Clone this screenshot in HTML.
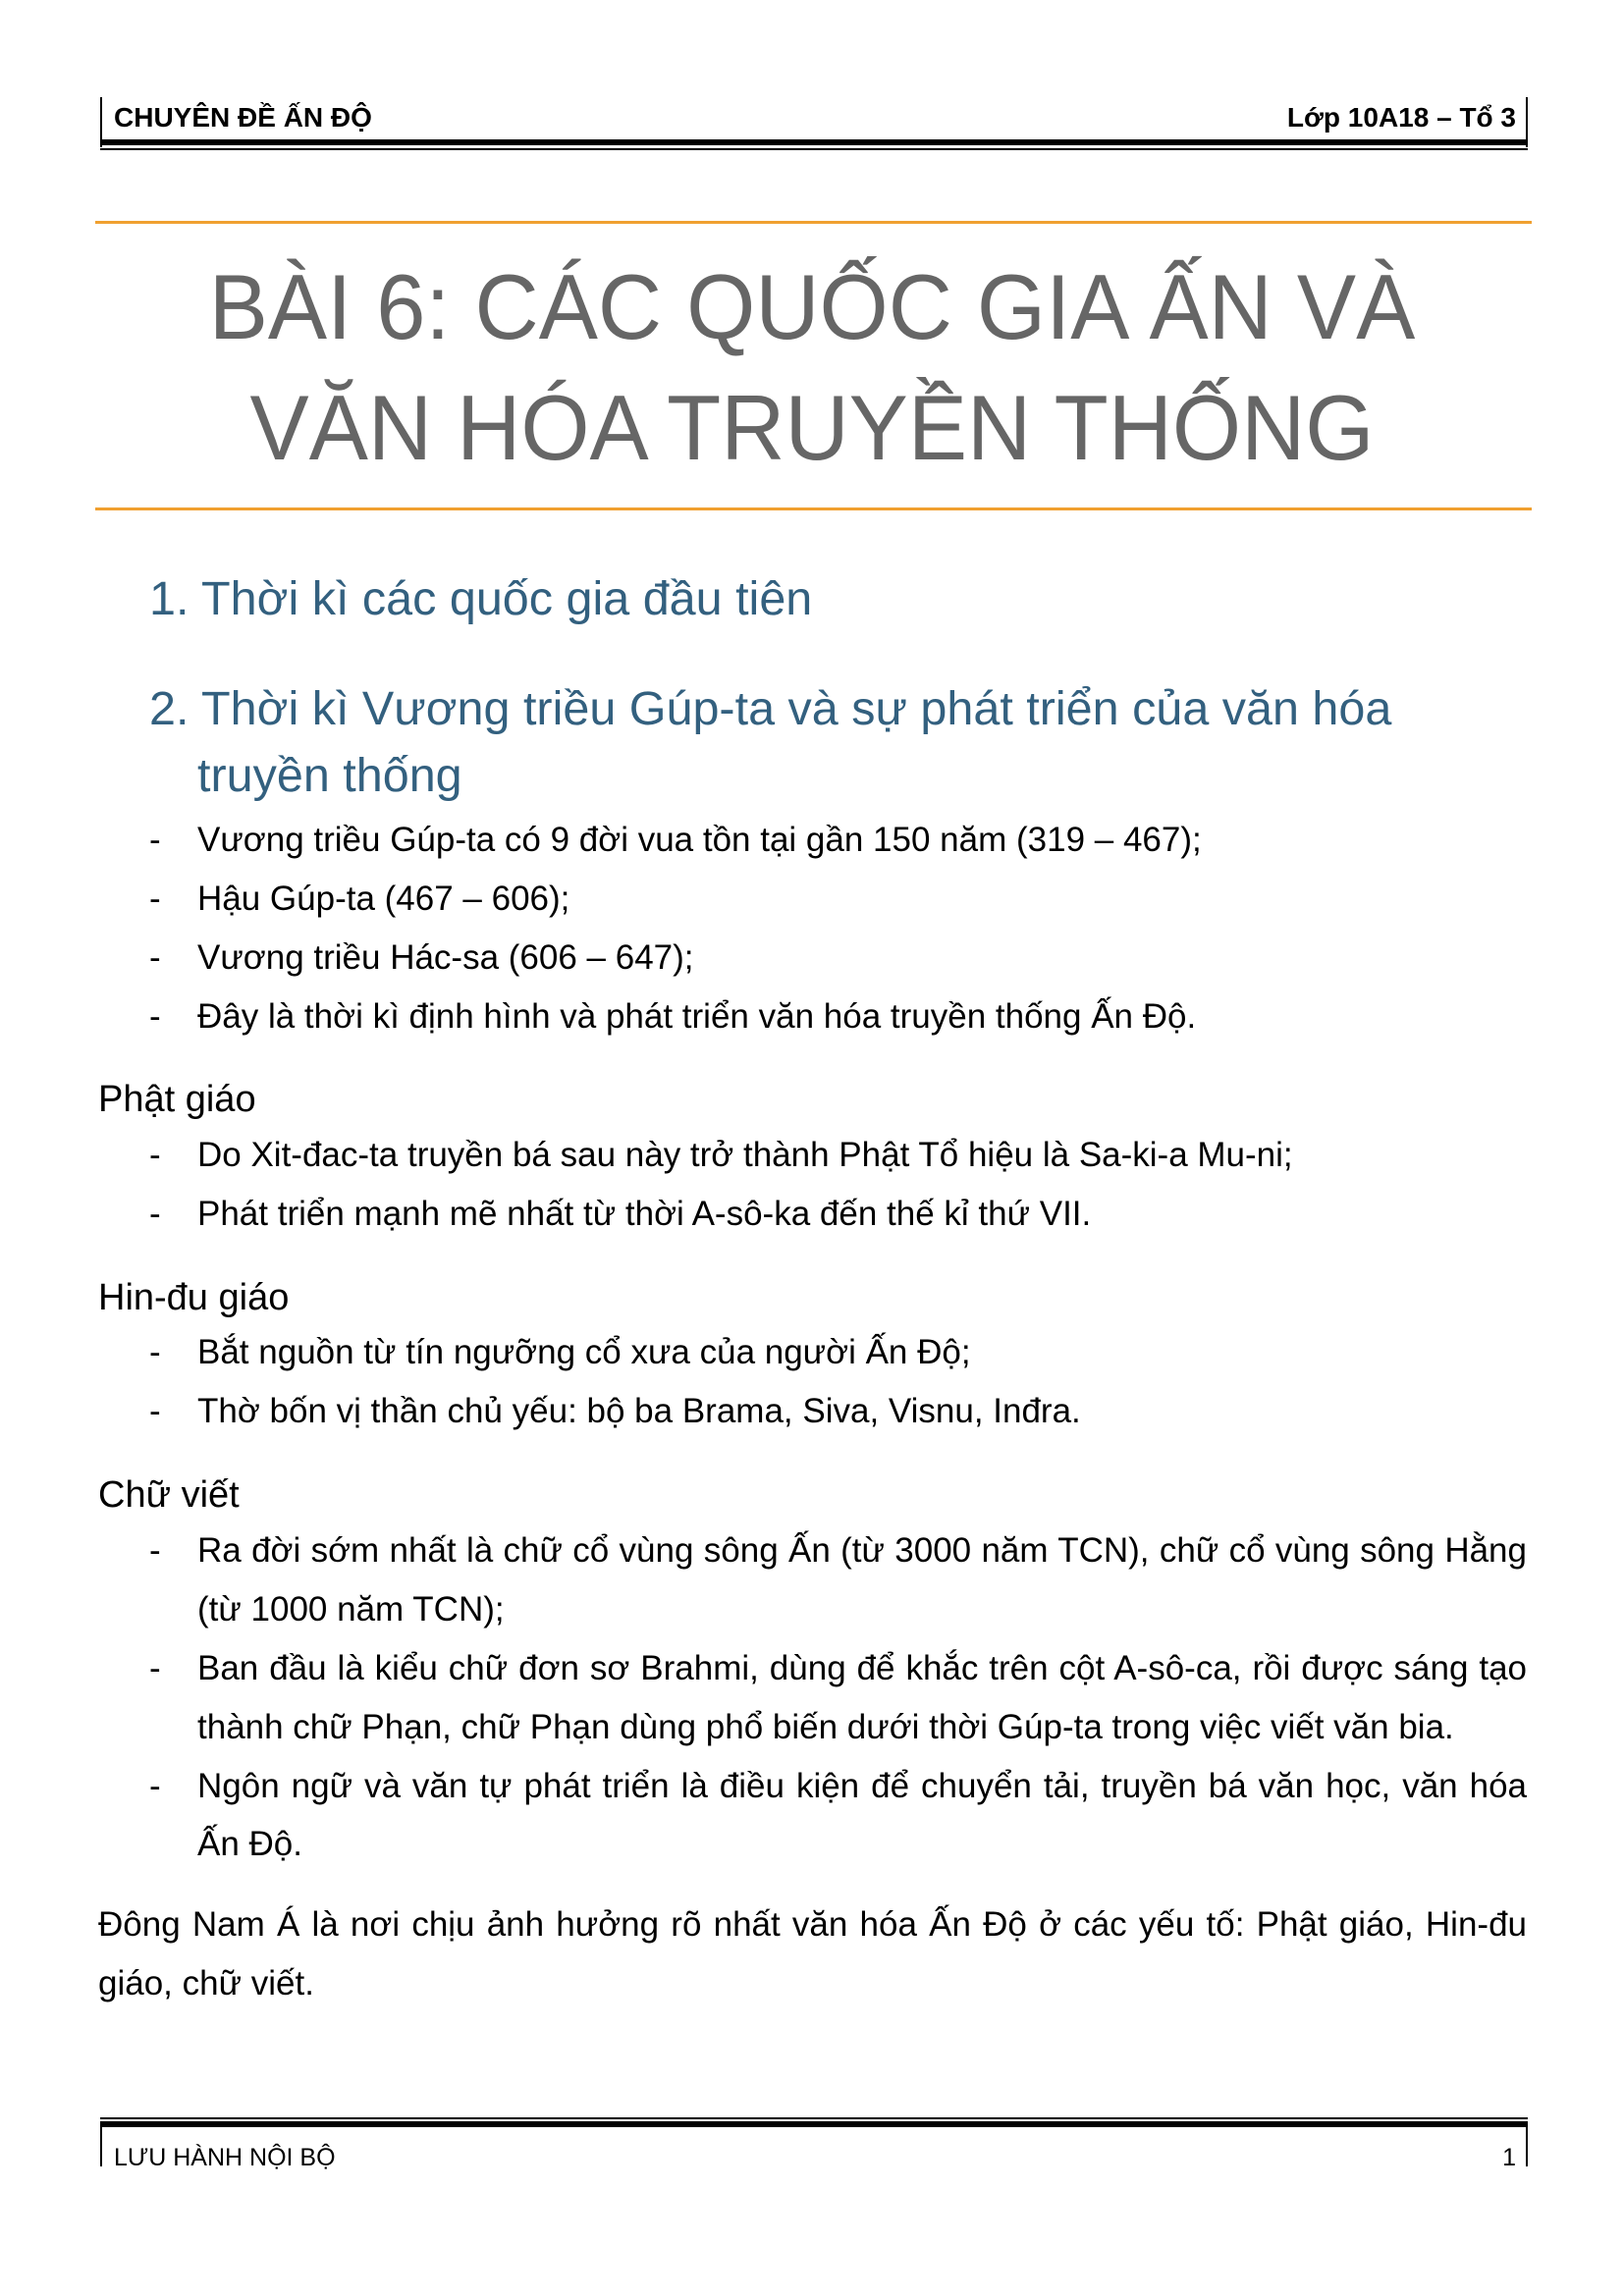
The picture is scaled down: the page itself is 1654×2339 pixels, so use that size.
<!DOCTYPE html>
<html><head><meta charset="utf-8"><style>
body{margin:0;width:1654px;height:2339px;background:#fff;position:relative;overflow:hidden;font-family:"Liberation Sans",sans-serif;color:#000}
.l{position:absolute;height:60px;line-height:60px;white-space:nowrap;font-size:35px}
.d{left:152px}
.t{left:201px}
.j{left:201px;width:1354px;text-align:justify;text-align-last:justify}
.h{color:#33607f;font-size:48.5px;left:152px}
.s{left:100px;font-size:38px}
.ti{position:absolute;left:0;width:1654px;text-align:center;font-size:94px;color:#666;height:120px;line-height:120px;transform:scaleX(0.96);transform-origin:827px 0;white-space:nowrap}
</style></head><body>
<div style="position:absolute;left:102px;top:99px;width:2px;height:51px;background:#000"></div>
<div style="position:absolute;left:1554px;top:99px;width:2px;height:51px;background:#000"></div>
<div style="position:absolute;left:102px;top:142px;width:1454px;height:6px;background:#000"></div>
<div style="position:absolute;left:102px;top:151px;width:1454px;height:2px;background:#000"></div>
<div class="l" style="left:116px;top:90px;font-weight:bold;font-size:28px">CHUYÊN ĐỀ ẤN ĐỘ</div>
<div class="l" style="right:110px;top:90px;font-weight:bold;font-size:28px">Lớp 10A18 – Tổ 3</div>
<div style="position:absolute;left:97px;top:225px;width:1463px;height:3px;background:#f0a030"></div>
<div class="ti" style="top:253px">BÀI 6: CÁC QUỐC GIA ẤN VÀ</div>
<div class="ti" style="top:376px">VĂN HÓA TRUYỀN THỐNG</div>
<div style="position:absolute;left:97px;top:517px;width:1463px;height:3px;background:#f0a030"></div>
<div class="l h" style="top:580px">1. Thời kì các quốc gia đầu tiên</div>
<div class="l h" style="top:692px">2. Thời kì Vương triều Gúp-ta và sự phát triển của văn hóa</div>
<div class="l h" style="top:760px;left:201px">truyền thống</div>
<div class="l d" style="top:826px">-</div><div class="l t" style="top:826px">Vương triều Gúp-ta có 9 đời vua tồn tại gần 150 năm (319 – 467);</div>
<div class="l d" style="top:886px">-</div><div class="l t" style="top:886px">Hậu Gúp-ta (467 – 606);</div>
<div class="l d" style="top:946px">-</div><div class="l t" style="top:946px">Vương triều Hác-sa (606 – 647);</div>
<div class="l d" style="top:1006px">-</div><div class="l t" style="top:1006px">Đây là thời kì định hình và phát triển văn hóa truyền thống Ấn Độ.</div>
<div class="l s" style="top:1090px">Phật giáo</div>
<div class="l d" style="top:1147px">-</div><div class="l t" style="top:1147px">Do Xit-đac-ta truyền bá sau này trở thành Phật Tổ hiệu là Sa-ki-a Mu-ni;</div>
<div class="l d" style="top:1207px">-</div><div class="l t" style="top:1207px">Phát triển mạnh mẽ nhất từ thời A-sô-ka đến thế kỉ thứ VII.</div>
<div class="l s" style="top:1292px">Hin-đu giáo</div>
<div class="l d" style="top:1348px">-</div><div class="l t" style="top:1348px">Bắt nguồn từ tín ngưỡng cổ xưa của người Ấn Độ;</div>
<div class="l d" style="top:1408px">-</div><div class="l t" style="top:1408px">Thờ bốn vị thần chủ yếu: bộ ba Brama, Siva, Visnu, Inđra.</div>
<div class="l s" style="top:1493px">Chữ viết</div>
<div class="l d" style="top:1550px">-</div><div class="l j" style="top:1550px">Ra đời sớm nhất là chữ cổ vùng sông Ấn (từ 3000 năm TCN), chữ cổ vùng sông Hằng</div>
<div class="l t" style="top:1610px">(từ 1000 năm TCN);</div>
<div class="l d" style="top:1670px">-</div><div class="l j" style="top:1670px">Ban đầu là kiểu chữ đơn sơ Brahmi, dùng để khắc trên cột A-sô-ca, rồi được sáng tạo</div>
<div class="l t" style="top:1730px">thành chữ Phạn, chữ Phạn dùng phổ biến dưới thời Gúp-ta trong việc viết văn bia.</div>
<div class="l d" style="top:1790px">-</div><div class="l j" style="top:1790px">Ngôn ngữ và văn tự phát triển là điều kiện để chuyển tải, truyền bá văn học, văn hóa</div>
<div class="l t" style="top:1849px">Ấn Độ.</div>
<div class="l j" style="top:1931px;left:100px;width:1455px">Đông Nam Á là nơi chịu ảnh hưởng rõ nhất văn hóa Ấn Độ ở các yếu tố: Phật giáo, Hin-đu</div>
<div class="l" style="top:1991px;left:100px">giáo, chữ viết.</div>
<div style="position:absolute;left:102px;top:2157px;width:1454px;height:2px;background:#000"></div>
<div style="position:absolute;left:102px;top:2161px;width:1454px;height:6px;background:#000"></div>
<div style="position:absolute;left:102px;top:2167px;width:2px;height:40px;background:#000"></div>
<div style="position:absolute;left:1554px;top:2167px;width:2px;height:40px;background:#000"></div>
<div class="l" style="left:116px;top:2168px;font-size:25px">LƯU HÀNH NỘI BỘ</div>
<div class="l" style="right:110px;top:2168px;font-size:25px">1</div>
</body></html>
